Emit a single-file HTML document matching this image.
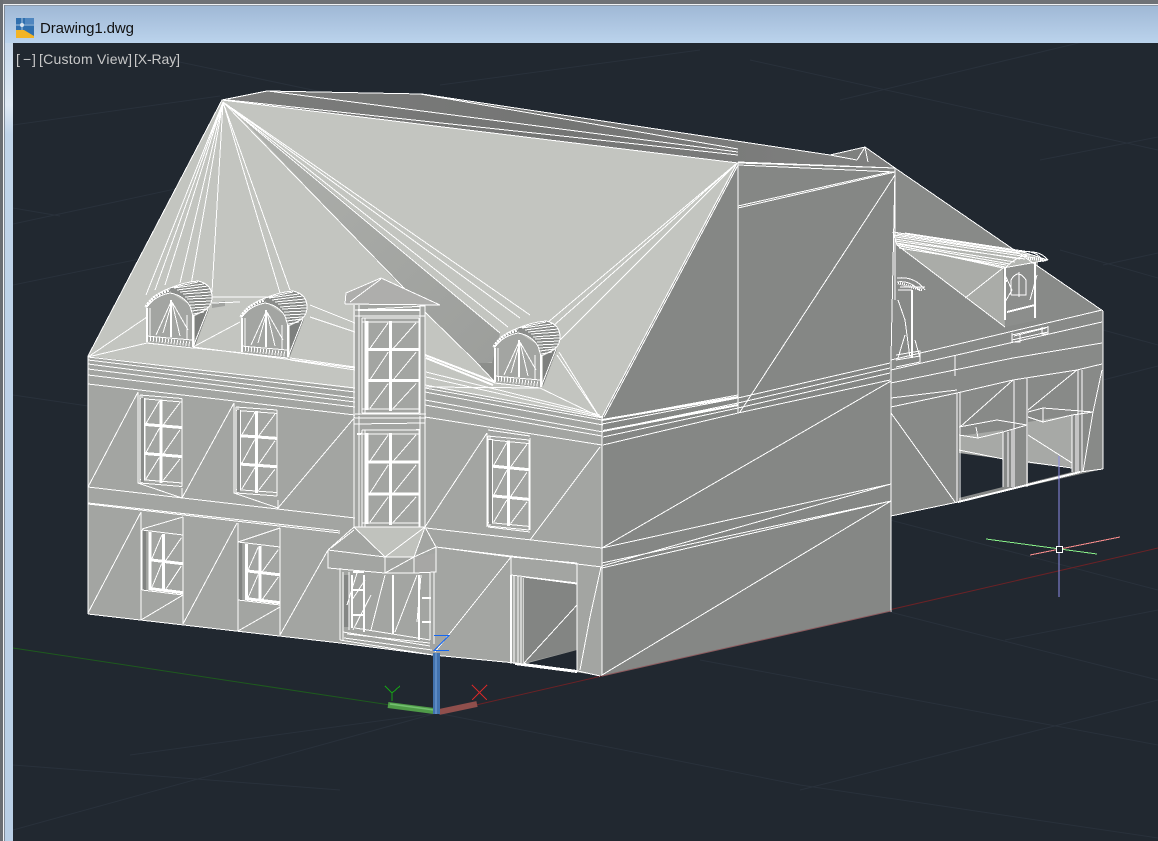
<!DOCTYPE html>
<html lang="en"><head><meta charset="utf-8"><title>Drawing1.dwg</title>
<style>
html,body{margin:0;padding:0;background:#212830;width:1158px;height:841px;overflow:hidden}
svg{display:block;position:absolute;left:0;top:0}
.l{fill:none;stroke:#fff;stroke-width:1;shape-rendering:crispEdges}
.n{vector-effect:non-scaling-stroke}
.t{font-family:"Liberation Sans",sans-serif}
</style></head><body>
<svg width="1158" height="841" viewBox="0 0 1158 841" xmlns="http://www.w3.org/2000/svg">
<defs>
<linearGradient id="tb" x1="0" y1="0" x2="0" y2="1"><stop offset="0" stop-color="#9bb4d2"/><stop offset="1" stop-color="#bbd3ec"/></linearGradient>
<linearGradient id="lf" x1="0" y1="0" x2="0" y2="1"><stop offset="0" stop-color="#b4cbe4"/><stop offset=".125" stop-color="#dfe9f3"/><stop offset=".16" stop-color="#c0d4e9"/><stop offset="1" stop-color="#b9cfe6"/></linearGradient>
<linearGradient id="bk" x1="0" y1="0" x2="1" y2="0"><stop offset="0" stop-color="#7c7d7c"/><stop offset=".5" stop-color="#747574"/><stop offset="1" stop-color="#808180"/></linearGradient>
<linearGradient id="st" x1="0" y1="0" x2="1" y2="1"><stop offset="0" stop-color="#b0b2ae"/><stop offset="1" stop-color="#9c9e9b"/></linearGradient>
<g id="w3">
<path d="M0 0H100V100H0Z" fill="#a3a5a2"/>
<path class="l n" d="M0 0H100M0 4H100M0 100H100M0 96H100M0 0V100M100 0V100"/>
<path class="l n" style="stroke-width:3" d="M50 3V98M8 33H100M8 66H100M9 3V97"/>
<path class="l n" d="M14 32L46 5M55 32L95 5M14 65L46 36M55 65L95 36M14 95L46 69M55 95L95 69M5 0V100"/>
</g>
<g id="w2">
<path d="M0 0H100V100H0Z" fill="#a3a5a2"/>
<path d="M0 0H10V100H0Z" fill="#828482"/>
<path class="l n" d="M0 0H100M0 100H100M100 0V100"/>
<path class="l n" style="stroke-width:3" d="M52 2V98M18 48H100M18 96H100M20 2V98"/>
<path class="l n" d="M24 46L48 5M58 46L96 5M24 94L48 52M58 94L96 52M0 0V100"/>
</g>
<g id="d">
<path d="M147 342L193 348L193 315L190 305L170 292L150 300L146 308Z" fill="#a3a5a2"/>
<path d="M146 308Q150 295 170 288Q185 282 198 281Q212 284 212 297Q212 306 205 310L193 316L190 305Q183 295 170 293Q155 296 146 308Z" fill="#8a8c8a"/>
<path d="M195 316L209 309L195 346Z" fill="#7e807e"/>
<path class="l" d="M146 308Q151 295 170 288Q185 282 198 281Q212 284 212 297Q212 306 205 310L193 316"/>
<path class="l" d="M148 306Q155 296 170 293Q183 295 190 306L193 316"/>
<path class="l" stroke-dasharray="2 1" style="stroke-width:3" d="M146 307Q152 295 170 290"/>
<path class="l" d="M170 288L198 282M174 288L204 284M177 290L208 286M180 292L210 289M183 294L211 292M185 297L212 295M187 299L212 298M189 302L212 301M190 305L211 304M191 308L208 307M192 311L206 309M193 314L204 312"/>
<path class="l" style="stroke-width:2" d="M147 308V342M193 315V347M171 300V337"/>
<path class="l" d="M150 308V337M187 315V339M171 302L156 335M172 302L163 333M172 302L180 336M172 302L188 330"/>
<path class="l" d="M146 336L192 340M146 343L193 348M193 347L208 309"/>
<path class="l" stroke-dasharray="1 2" style="stroke-width:5" d="M150 339L190 344"/>
</g>
</defs>

<!-- viewport bg -->
<rect width="1158" height="841" fill="#212830"/>
<!-- faint grid -->
<g fill="none" stroke="#29313b" stroke-width="1">
<path d="M13 285L320 222M13 224L240 175M13 125L220 96M440 85L700 50M840 100L1158 24M1040 160L1158 137M1103 265L1158 253M1103 380L1158 366M13 395L88 406M13 208L60 216M170 60L360 100M750 60L1158 150M1060 250L1158 278M1103 330L1158 345"/>
<path d="M437 713L13 830M437 713L800 785L1158 838M437 713L130 755M13 765L340 790M890 520L1158 590M890 612L1158 680M700 660L1158 745M1005 640L1158 610M800 790L1158 700"/>
</g>
<path d="M13 648L390 705" stroke="#1e5a1e" stroke-width="1" fill="none"/>
<path d="M476 705L1158 548" stroke="#6b2226" stroke-width="1" fill="none"/>

<!-- right wing -->
<polygon points="862,148 895,168 1103,311 1103,469 958,502 891,516 891,170" fill="#888a88"/>
<polygon points="959,436 1003,430 1003,487 959,498" fill="#a7a9a6"/>
<polygon points="1028,422 1072,415 1072,467 1028,462" fill="#a7a9a6"/>
<polygon points="959,453 1003,459 1003,487 959,498" fill="#212830"/>
<polygon points="1028,463 1072,468 1072,472 1028,483" fill="#212830"/>
<polygon points="897,245 1003,268 1005,327" fill="#aaaca8"/>
<polygon points="1005,267 1038,260 1037,320 1005,327" fill="#8c8e8c"/>
<polygon points="893,232 1023,252 1048,260 1003,268 897,245" fill="#b3b5b1"/>

<!-- main back roof -->
<polygon points="222,100 267,91 422,94 830,155 865,147 895,168 738,165" fill="url(#bk)"/>
<!-- main right bay -->
<polygon points="738,162 895,168 891,400 891,611 602,676 602,418" fill="#858785"/>
<!-- left facade -->
<polygon points="88,356 355,380 425,380 602,418 602,676 515,663 433,655 340,643 88,614" fill="#a3a5a2"/>
<!-- main roof -->
<polygon points="222,100 738,163 602,418 425,386 355,389 88,356" fill="#c3c5c0"/>
<polygon points="228,104 426,313 477,364 496,362 500,333 425,270" fill="url(#st)"/>
<polygon points="477,363 494,381 498,340 492,363" fill="#8c8e8b"/>
<polygon points="212,303 225,301 225,306 212,308" fill="#a2a4a1"/>
<!-- bands shading on facade -->
<polygon points="88,364 355,392 355,417 88,384" fill="#a3a5a2"/>
<polygon points="425,392 602,422 602,446 425,418" fill="#a3a5a2"/>

<!-- roof outlines -->
<g class="l">
<path d="M88 356L222 100L267 91L422 94L830 155L865 147L895 168M222 100L738 163M228 100L738 155M268 91L738 152M420 94L738 149"/>
<path d="M88 356V614M88 614L340 643M340 643L433 655L515 663L578 671L600 676"/>
<!-- fan left apex -->
<path d="M223 102L146 295M223 102L155 290M223 102L165 285M223 102L180 283M223 102L191 285M223 102L212 292M223 102L280 293M223 102L290 290"/>
<path d="M223 102L403 287M403 287L426 313M426 313L477 363M477 363L494 381M223 102L500 333M223 102L508 327M223 102L520 318M223 102L530 315"/>
<!-- right fan -->
<path d="M737 163L547 323M737 163L552 327M737 163L560 340M737 163L602 417M738 165L604 417"/>
<path d="M559 352L600 418M557 355L600 418"/>
<!-- roof lines -->
<path d="M88 357L147 317M88 357L147 343M147 343L243 353M193 347L240 322M212 297L267 297M212 303L240 302M310 305L355 323M310 317L355 332M290 358L355 367M290 360L355 370M193 347L355 368"/>
<path d="M426 355L495 383M426 358L493 385M426 377L603 417M426 387L540 388M540 388L602 418M426 372L600 415"/>
<path d="M88 357L355 388M88 364L355 398M88 375L355 407M88 384L355 415M88 360L355 392M88 369L355 402"/>
<path d="M425 385L603 418M425 392L603 425M425 400L603 432M425 405L602 436M425 417L602 445M425 388L602 420"/>
<path d="M88 487L355 518M88 504L340 533M88 503L340 531M426 528L602 548M436 547L602 567"/>
<!-- wall diagonals/panels -->
<path d="M88 487L138 392M182 498L234 403M278 508L355 417M88 613L141 512M183 517V624M141 512V620M238 523V631M280 528V635M183 624L237 523M280 635L328 550M141 620L183 595M238 631L280 607M142 529L183 517M238 542L280 528"/>
<path d="M138 392V483L182 498V488M234 403V493L278 508V500"/>
<path d="M487 433L425 527M487 433V527M530 438V530M600 447L530 540M436 547L511 557M511 557L435 652M511 557V664M577 563V672M601 567L590 617L580 670M514 575V664M518 576V664M521 577V664M524 578V664"/>
<path d="M488 527L530 532M488 520L530 525M488 430L530 436"/>
</g>
<g class="l" style="stroke-width:2"><path d="M511 575V663M515 664L577 672"/></g>
<!-- door -->
<polygon points="524,577 577,584 577,650 524,663" fill="#838583"/>
<polygon points="524,664 577,650 577,672" fill="#212830"/>
<path class="l" d="M524 577L577 584M524 663L577 605M511 557L577 563M511 575L577 583M577 583V672"/>
<path class="l" d="M524 664L577 671" style="stroke-width:2"/>

<!-- windows -->
<use href="#w3" transform="matrix(.42,.035,0,.88,140,395)"/>
<use href="#w3" transform="matrix(.41,.03,0,.86,236,407)"/>
<use href="#w3" transform="matrix(.41,.04,0,.90,488,436)"/>
<use href="#w2" transform="matrix(.41,.05,0,.60,142,530)"/>
<use href="#w2" transform="matrix(.42,.05,0,.58,238,542)"/>
<rect x="141" y="398" width="3" height="84" fill="#8a8c8a"/>
<rect x="237" y="410" width="3" height="82" fill="#8a8c8a"/>
<rect x="489" y="440" width="3" height="84" fill="#8a8c8a"/>

<!-- dormers -->
<use href="#d"/>
<use href="#d" transform="translate(95,10)"/>
<use href="#d" transform="translate(348,40)"/>

<!-- tower -->
<polygon points="355,305 425,305 425,527 355,527" fill="#a3a5a2"/>
<polygon points="345,304 346,293 381,278 440,305" fill="#aeaeac"/>
<path class="l" d="M345 304L346 293L381 278L440 305L345 304M350 302L381 279"/>
<path class="l" d="M354 305V527M359 305V415M425 305V528M420 305V415M355 310L425 306M355 316L425 316M355 414H426M355 418H426M354 424L425 423M359 416V528M420 416V528"/>
<path class="l" style="stroke-width:2" d="M358 310H420M357 434L420 430"/>
<use href="#w3" transform="matrix(.57,0,0,.95,362,318)"/>
<use href="#w3" transform="matrix(.57,0,0,.97,362,430)"/>
<!-- tower to lines on roof side -->
<path class="l" d="M425 355L495 382M426 358L493 385" style="stroke-width:2"/>

<!-- porch -->
<polygon points="328,550 354,527 425,527 436,547 436,572 414,573 385,573 328,568" fill="#a3a5a2"/>
<polygon points="354,527 425,527 414,557 385,557" fill="#c0c2bd"/>
<polygon points="414,557 436,553 436,572 417,573" fill="#a7a7a5"/>
<polygon points="340,572 436,572 436,648 340,636" fill="#a3a5a2"/>
<polygon points="344,575 349,575 349,627 344,627" fill="#848684"/>
<g class="l">
<path d="M328 550L354 527M331 548L354 530M328 550V568L385 573H414L436 572V547L425 527M354 527H425M354 527L385 557M425 527L385 557M385 557V573M385 557H414V573M414 557L425 527M385 557L328 550M414 557L436 547M385 573L414 557M425 527V512M354 527V513"/>
<path d="M340 568V640M343 572V640M349 572V630M357 573L347 605M352 600L365 580M353 630L371 595M385 575L371 630M417 575L395 632M421 575L417 622M430 572V640M434 572V644"/>
<path d="M355 628L430 640M343 632L430 646M344 638L432 650M340 640L433 655M347 634L430 643"/>
</g>
<g class="l" style="stroke-width:2"><path d="M352 575V628M364 575V632M393 575V634M419 575V640M353 590H363M353 615H363M422 598H431M422 622H431M353 572H364"/></g>

<!-- right bay lines -->
<g class="l">
<path d="M738 163V413M738 163L895 168M738 165L895 172M738 208L895 172M738 206L890 172M895 175L740 412M895 168V300M738 413L890 380M602 420L738 395M602 424L738 398M603 431L738 403M603 437L738 408M603 445L738 413M738 398L890 363M738 403L890 368M738 408L890 373"/>
<path d="M891 358V612M602 418V676M602 548L891 381M602 548L891 484M602 563L891 501M602 566L891 484M602 568L891 501M602 675L891 501"/>
</g>
<path class="l" d="M602 420L738 397M603 431L738 405" style="stroke-width:2"/>
<path d="M602 676L891 611" stroke="#8d5a5e" stroke-width="1" fill="none"/>
<path class="l" d="M830 155L857 160M865 147L857 160M865 147L868 162M865 147L895 168M738 162L895 168"/>

<!-- wing lines -->
<g class="l">
<path d="M895 168L1103 311M1103 311V469M891 516L958 502M1080 472L1103 469"/>
<path d="M891 360L1102 310M891 370L1102 322M891 383L1013 358M1013 358L1102 343M891 398L957 390M891 407L957 393L1013 380L1077 370L1102 364M957 393V502M960 393V502M891 413L955 502"/>
<path d="M960 427L1013 380M1028 410L1077 370M1014 380V487M1027 378V487M1082 370V472M1078 370V472M1102 370L1093 412L1083 472"/>
<path d="M959 427L997 420L1027 425M959 435L978 438L1003 432L1027 425M1028 412L1043 408L1093 412M1028 417L1043 422L1072 415L1093 412M1028 435L1072 463M976 427L978 438M1043 408V422"/>
<path d="M1003 432V487M1008 432V487M1012 430V487M1072 415V472M1076 415V472M959 450L1003 459M1028 462L1072 468"/>
<path d="M893 232L1023 252L1048 260L1003 268L897 245L893 232M896 237L1035 258M895 241L1025 259M900 246L1005 267M1003 268L965 298M897 245L1005 327"/>
<path d="M905 233L1030 252M897 234L1020 253M894 235L1028 255M895 239L1020 259M896 243L1015 262M898 244L1010 264M899 248L1006 265"/>
<path d="M1012 335L1048 327M1012 340L1048 332M1012 333V342H1020V335M1042 327V334H1048V326M1014 336L1046 328M920 358V362M955 355V376M896 355L920 351L920 362L896 367M896 360L920 356"/>
<path d="M895 170L891 358"/>
</g>
<g class="l" style="stroke-width:2">
<path d="M958 502L1080 472M1005 268V320M1035 262V318M1007 312L1035 305M1007 281H1005"/>
<path d="M912 290V358"/>
</g>
<g class="l">
<path d="M1023 252Q1040 250 1048 260M1030 252Q1040 254 1043 262M1005 268Q1018 255 1030 255M1011 295V280Q1018 268 1026 280V295H1011M1019 272V297M1005 302L1012 290M1037 275L1030 300M1005 275L1012 290"/>
<path d="M897 278Q915 276 925 290M897 282Q910 280 920 291M900 287H925M898 290L912 290M898 300L905 320L910 358M905 335L898 358M915 340L920 358"/>
</g>
<path class="l" stroke-dasharray="1 1" style="stroke-width:3" d="M898 283L923 290"/>
<path class="l" stroke-dasharray="1 1" style="stroke-width:3" d="M1028 258L1046 260"/>

<!-- crosshair -->
<path d="M1059 456V597" stroke="#8d8de8" stroke-width="1" fill="none" shape-rendering="crispEdges"/>
<path d="M986 539L1097 554" stroke="#88ee88" stroke-width="1" fill="none" shape-rendering="crispEdges"/>
<path d="M1030 555L1120 537" stroke="#ee8888" stroke-width="1" fill="none" shape-rendering="crispEdges"/>
<rect x="1056.500" y="546.500" width="6" height="6" fill="#212830" stroke="#fff" stroke-width="1"/>

<!-- UCS -->
<path d="M388 705L434 711" stroke="#4f9a48" stroke-width="6" fill="none"/>
<path d="M390 704L434 710" stroke="#74c070" stroke-width="1.500" fill="none"/>
<path d="M439 712L477 704" stroke="#8f4f4c" stroke-width="6" fill="none"/>
<rect x="433" y="653" width="7" height="61" fill="#4272ad"/>
<rect x="435" y="653" width="2" height="61" fill="#5d8bc4"/>
<path d="M434 635.500H449L434 650.500H449" fill="none" stroke="#1467f0" stroke-width="1" shape-rendering="crispEdges"/>
<path d="M385 686L392 693L400 686M392 693V701" fill="none" stroke="#15a015" stroke-width="1" shape-rendering="crispEdges"/>
<path d="M472 685L487 700M487 685L472 700" fill="none" stroke="#d02828" stroke-width="1" shape-rendering="crispEdges"/>

<!-- frame -->
<rect x="0" y="0" width="13" height="841" fill="url(#lf)"/>
<rect x="0" y="0" width="1158" height="43" fill="url(#tb)"/>
<rect x="0" y="0" width="1158" height="4" fill="#6f7277"/>
<rect x="0" y="4" width="1158" height="1" fill="#f0f2f4"/>
<rect x="0" y="5" width="1158" height="1" fill="#8b98a8"/>
<rect x="0" y="0" width="3" height="841" fill="#6a6e73"/>
<rect x="3" y="4" width="1" height="837" fill="#f0f2f4"/>
<rect x="4" y="5" width="1" height="836" fill="#7f8a97"/>

<!-- icon -->
<rect x="16" y="18" width="18" height="20" fill="#2f6fae"/>
<polygon points="16,38 34,38 34,36 24,30 16,30" fill="#f3b425"/>
<rect x="25" y="18" width="9" height="6" fill="#4f86bf"/>
<path d="M16 25H34M22 18V30" stroke="#a9c5e0" stroke-width="1" fill="none"/>
<circle cx="22" cy="25" r="2" fill="#d8e4ef"/>

<text class="t" x="40" y="33" font-size="15" fill="#111" textLength="94">Drawing1.dwg</text>
<text class="t" x="16" y="64" font-size="14" fill="#c8c8c8">[</text>
<text class="t" x="23" y="64" font-size="14" fill="#c8c8c8">−</text>
<text class="t" x="32" y="64" font-size="14" fill="#c8c8c8">]</text>
<text class="t" x="39" y="64" font-size="14" fill="#c8c8c8" textLength="93">[Custom View]</text>
<text class="t" x="134" y="64" font-size="14" fill="#c8c8c8" textLength="46">[X-Ray]</text>
</svg>
</body></html>
